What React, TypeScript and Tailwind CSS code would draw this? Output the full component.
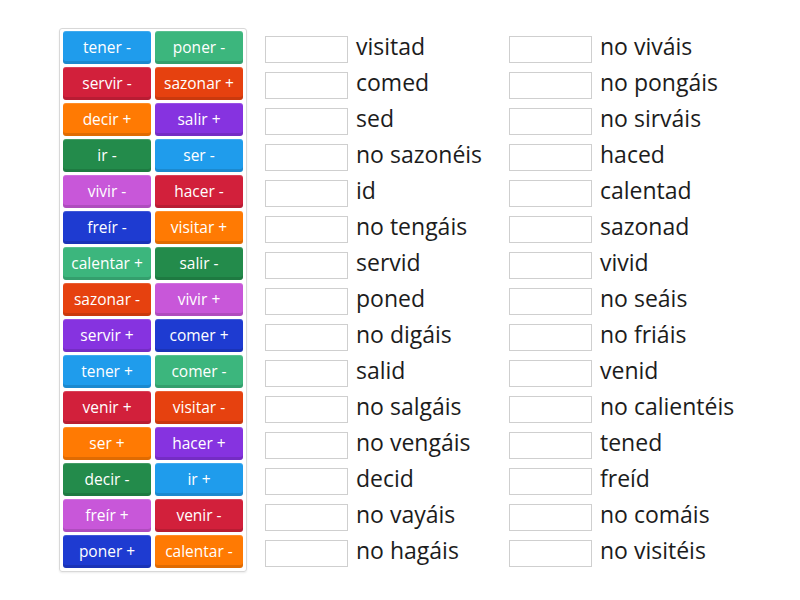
const tileColors: Record<string, string> = {
  blue: "bg-[#1f9cec]",
  green: "bg-[#3cb67d]",
  red: "bg-[#d2203b]",
  rust: "bg-[#e6410f]",
  orange: "bg-[#ff7a03]",
  purple: "bg-[#8633e0]",
  forest: "bg-[#238b4b]",
  magenta: "bg-[#c857d9]",
  navy: "bg-[#1e3bd1]",
}

const tiles: [string, string][] = [
  ["tener -", "blue"], ["poner -", "green"],
  ["servir -", "red"], ["sazonar +", "rust"],
  ["decir +", "orange"], ["salir +", "purple"],
  ["ir -", "forest"], ["ser -", "blue"],
  ["vivir -", "magenta"], ["hacer -", "red"],
  ["freír -", "navy"], ["visitar +", "orange"],
  ["calentar +", "green"], ["salir -", "forest"],
  ["sazonar -", "rust"], ["vivir +", "magenta"],
  ["servir +", "purple"], ["comer +", "navy"],
  ["tener +", "blue"], ["comer -", "green"],
  ["venir +", "red"], ["visitar -", "rust"],
  ["ser +", "orange"], ["hacer +", "purple"],
  ["decir -", "forest"], ["ir +", "blue"],
  ["freír +", "magenta"], ["venir -", "red"],
  ["poner +", "navy"], ["calentar -", "orange"],
]

const colA = [
  "visitad", "comed", "sed", "no sazonéis", "id", "no tengáis", "servid", "poned",
  "no digáis", "salid", "no salgáis", "no vengáis", "decid", "no vayáis", "no hagáis",
]

const colB = [
  "no viváis", "no pongáis", "no sirváis", "haced", "calentad", "sazonad", "vivid", "no seáis",
  "no friáis", "venid", "no calientéis", "tened", "freíd", "no comáis", "no visitéis",
]

function AnswerColumn({ items }: { items: string[] }) {
  return (
    <div className="flex flex-col gap-[3px] w-[244px]">
      {items.map((word) => (
        <div key={word} className="h-[33px] flex items-center gap-[8px]">
          <div className="w-[83px] h-[27px] mt-[3px] border border-[#cfcfcf] bg-white shrink-0"></div>
          <span className="text-[23px] leading-none text-[#1c1c1c] whitespace-nowrap -mt-[3px]">{word}</span>
        </div>
      ))}
    </div>
  )
}

export default function App() {
  return (
    <div className="w-[800px] h-[600px] bg-white pt-[28px] pl-[59px] flex font-['Open_Sans',sans-serif]">
      <div className="w-[188px] h-[544px] border border-[#d8d8d8] rounded-[3px] pt-[2px] px-[3px] pb-[3px] shadow-[0_1px_2px_rgba(0,0,0,0.08)]">
        <div className="grid grid-cols-2 gap-x-[4px] gap-y-[3px]">
          {tiles.map(([label, color], i) => (
            <div
              key={i}
              className={`${tileColors[color]} h-[33px] rounded-[3px] flex items-center justify-center text-white text-[15.5px] font-medium shadow-[inset_0_-3px_0_rgba(0,0,0,0.12),inset_0_1px_0_rgba(255,255,255,0.15)]`}
            >
              {label}
            </div>
          ))}
        </div>
      </div>
      <div className="ml-[18px] mt-[3px] flex">
        <AnswerColumn items={colA} />
        <AnswerColumn items={colB} />
      </div>
    </div>
  )
}
